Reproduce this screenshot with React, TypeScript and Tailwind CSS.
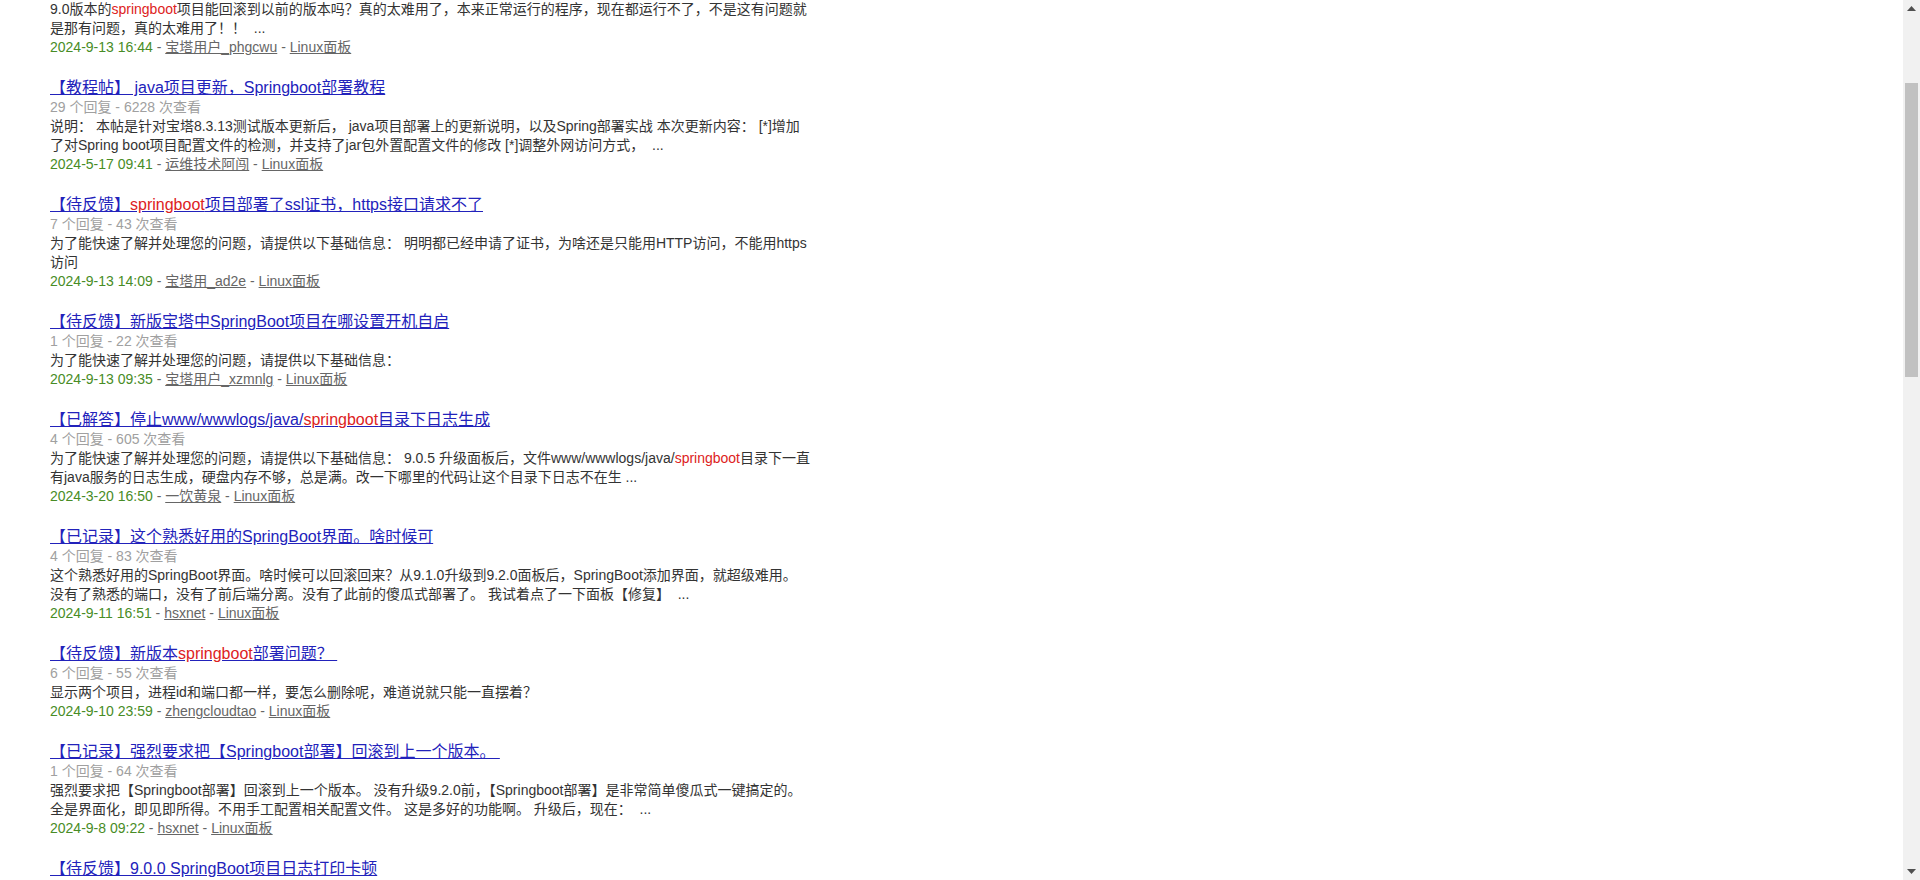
import { Fragment, useEffect, useRef } from "react";

type Post = {
  title?: string;
  meta?: string;
  desc: string;
  date: string;
  author: string;
};

const posts: Post[] = [
  {
    desc: "9.0版本的springboot项目能回滚到以前的版本吗？真的太难用了，本来正常运行的程序，现在都运行不了，不是这有问题就是那有问题，真的太难用了！！ \u00a0...",
    date: "2024-9-13 16:44",
    author: "宝塔用户_phgcwu",
  },
  {
    title: "【教程帖】 java项目更新，Springboot部署教程",
    meta: "29 个回复 - 6228 次查看",
    desc: "说明： 本帖是针对宝塔8.3.13测试版本更新后， java项目部署上的更新说明，以及Spring部署实战 本次更新内容： [*]增加了对Spring boot项目配置文件的检测，并支持了jar包外置配置文件的修改 [*]调整外网访问方式， \u00a0...",
    date: "2024-5-17 09:41",
    author: "运维技术阿闯",
  },
  {
    title: "【待反馈】springboot项目部署了ssl证书，https接口请求不了",
    meta: "7 个回复 - 43 次查看",
    desc: "为了能快速了解并处理您的问题，请提供以下基础信息： 明明都已经申请了证书，为啥还是只能用HTTP访问，不能用https访问",
    date: "2024-9-13 14:09",
    author: "宝塔用_ad2e",
  },
  {
    title: "【待反馈】新版宝塔中SpringBoot项目在哪设置开机自启",
    meta: "1 个回复 - 22 次查看",
    desc: "为了能快速了解并处理您的问题，请提供以下基础信息：",
    date: "2024-9-13 09:35",
    author: "宝塔用户_xzmnlg",
  },
  {
    title: "【已解答】停止www/wwwlogs/java/springboot目录下日志生成",
    meta: "4 个回复 - 605 次查看",
    desc: "为了能快速了解并处理您的问题，请提供以下基础信息： 9.0.5 升级面板后，文件www/wwwlogs/java/springboot目录下一直有java服务的日志生成，硬盘内存不够，总是满。改一下哪里的代码让这个目录下日志不在生 ...",
    date: "2024-3-20 16:50",
    author: "一饮黄泉",
  },
  {
    title: "【已记录】这个熟悉好用的SpringBoot界面。啥时候可",
    meta: "4 个回复 - 83 次查看",
    desc: "这个熟悉好用的SpringBoot界面。啥时候可以回滚回来？从9.1.0升级到9.2.0面板后，SpringBoot添加界面，就超级难用。\n没有了熟悉的端口，没有了前后端分离。没有了此前的傻瓜式部署了。 我试着点了一下面板【修复】 \u00a0...",
    date: "2024-9-11 16:51",
    author: "hsxnet",
  },
  {
    title: "【待反馈】新版本springboot部署问题？\u00a0",
    meta: "6 个回复 - 55 次查看",
    desc: "显示两个项目，进程id和端口都一样，要怎么删除呢，难道说就只能一直摆着？",
    date: "2024-9-10 23:59",
    author: "zhengcloudtao",
  },
  {
    title: "【已记录】强烈要求把【Springboot部署】回滚到上一个版本。\u00a0",
    meta: "1 个回复 - 64 次查看",
    desc: "强烈要求把【Springboot部署】回滚到上一个版本。 没有升级9.2.0前，【Springboot部署】是非常简单傻瓜式一键搞定的。全是界面化，即见即所得。不用手工配置相关配置文件。 这是多好的功能啊。 升级后，现在： \u00a0...",
    date: "2024-9-8 09:22",
    author: "hsxnet",
  },
];

const SCROLL_TOP = 196;

// the keyword is printed in red wherever it appears in lower case
function Highlight({ text }: { text: string }) {
  const parts = text.split("springboot");
  return (
    <>
      {parts.map((part, i) => (
        <Fragment key={i}>
          {part}
          {i < parts.length - 1 ? <span className="text-[#dd2222]">springboot</span> : null}
        </Fragment>
      ))}
    </>
  );
}

function PostItem({ post }: { post: Post }) {
  return (
    <div className="mb-[21px]">
      {post.title ? (
        <a href="#" className="block text-[16px] leading-[20px] text-[#2222bb] underline">
          <Highlight text={post.title} />
        </a>
      ) : null}
      {post.meta ? <div className="text-[14px] leading-[19px] text-[#a0a0a0]">{post.meta}</div> : null}
      <div className="whitespace-pre-line text-[14px] leading-[19px] text-[#333333]">
        <Highlight text={post.desc} />
      </div>
      <div className="text-[14px] leading-[19px] text-[#666666]">
        <span className="text-[#488c26]">{post.date}</span>
        {" - "}
        <a href="#" className="underline">
          {post.author}
        </a>
        {" - "}
        <a href="#" className="underline">
          Linux面板
        </a>
      </div>
    </div>
  );
}

function ScrollBar() {
  return (
    <div className="flex w-[17px] shrink-0 flex-col bg-[#f1f1f1]">
      <div className="flex h-[17px] items-center justify-center">
        <svg width="9" height="5" viewBox="0 0 9 5">
          <polygon points="4.5,0 9,5 0,5" fill="#505050" />
        </svg>
      </div>
      <div className="h-[66px]" />
      <div className="mx-[2px] h-[294px] bg-[#c1c1c1]" />
      <div className="flex-1" />
      <div className="flex h-[17px] items-center justify-center">
        <svg width="9" height="5" viewBox="0 0 9 5">
          <polygon points="0,0 9,0 4.5,5" fill="#505050" />
        </svg>
      </div>
    </div>
  );
}

export default function App() {
  const scrollRef = useRef<HTMLDivElement>(null);

  useEffect(() => {
    if (scrollRef.current) {
      scrollRef.current.scrollTop = SCROLL_TOP;
    }
  }, []);

  return (
    <div className="flex h-screen bg-white font-['Liberation_Sans','Noto_Sans_CJK_SC',sans-serif]">
      <div
        ref={(el) => {
          scrollRef.current = el;
          if (el) el.scrollTop = SCROLL_TOP;
        }}
        className="flex-1 overflow-y-scroll [scrollbar-width:none]"
      >
        <div className="min-h-[2532px] pl-[50px] pt-[196px]">
          <div className="w-[761px]">
            {posts.map((post, i) => (
              <PostItem key={i} post={post} />
            ))}
            <a href="#" className="block text-[16px] leading-[20px] text-[#2222bb] underline">
              【待反馈】9.0.0 SpringBoot项目日志打印卡顿
            </a>
          </div>
        </div>
      </div>
      <ScrollBar />
    </div>
  );
}
